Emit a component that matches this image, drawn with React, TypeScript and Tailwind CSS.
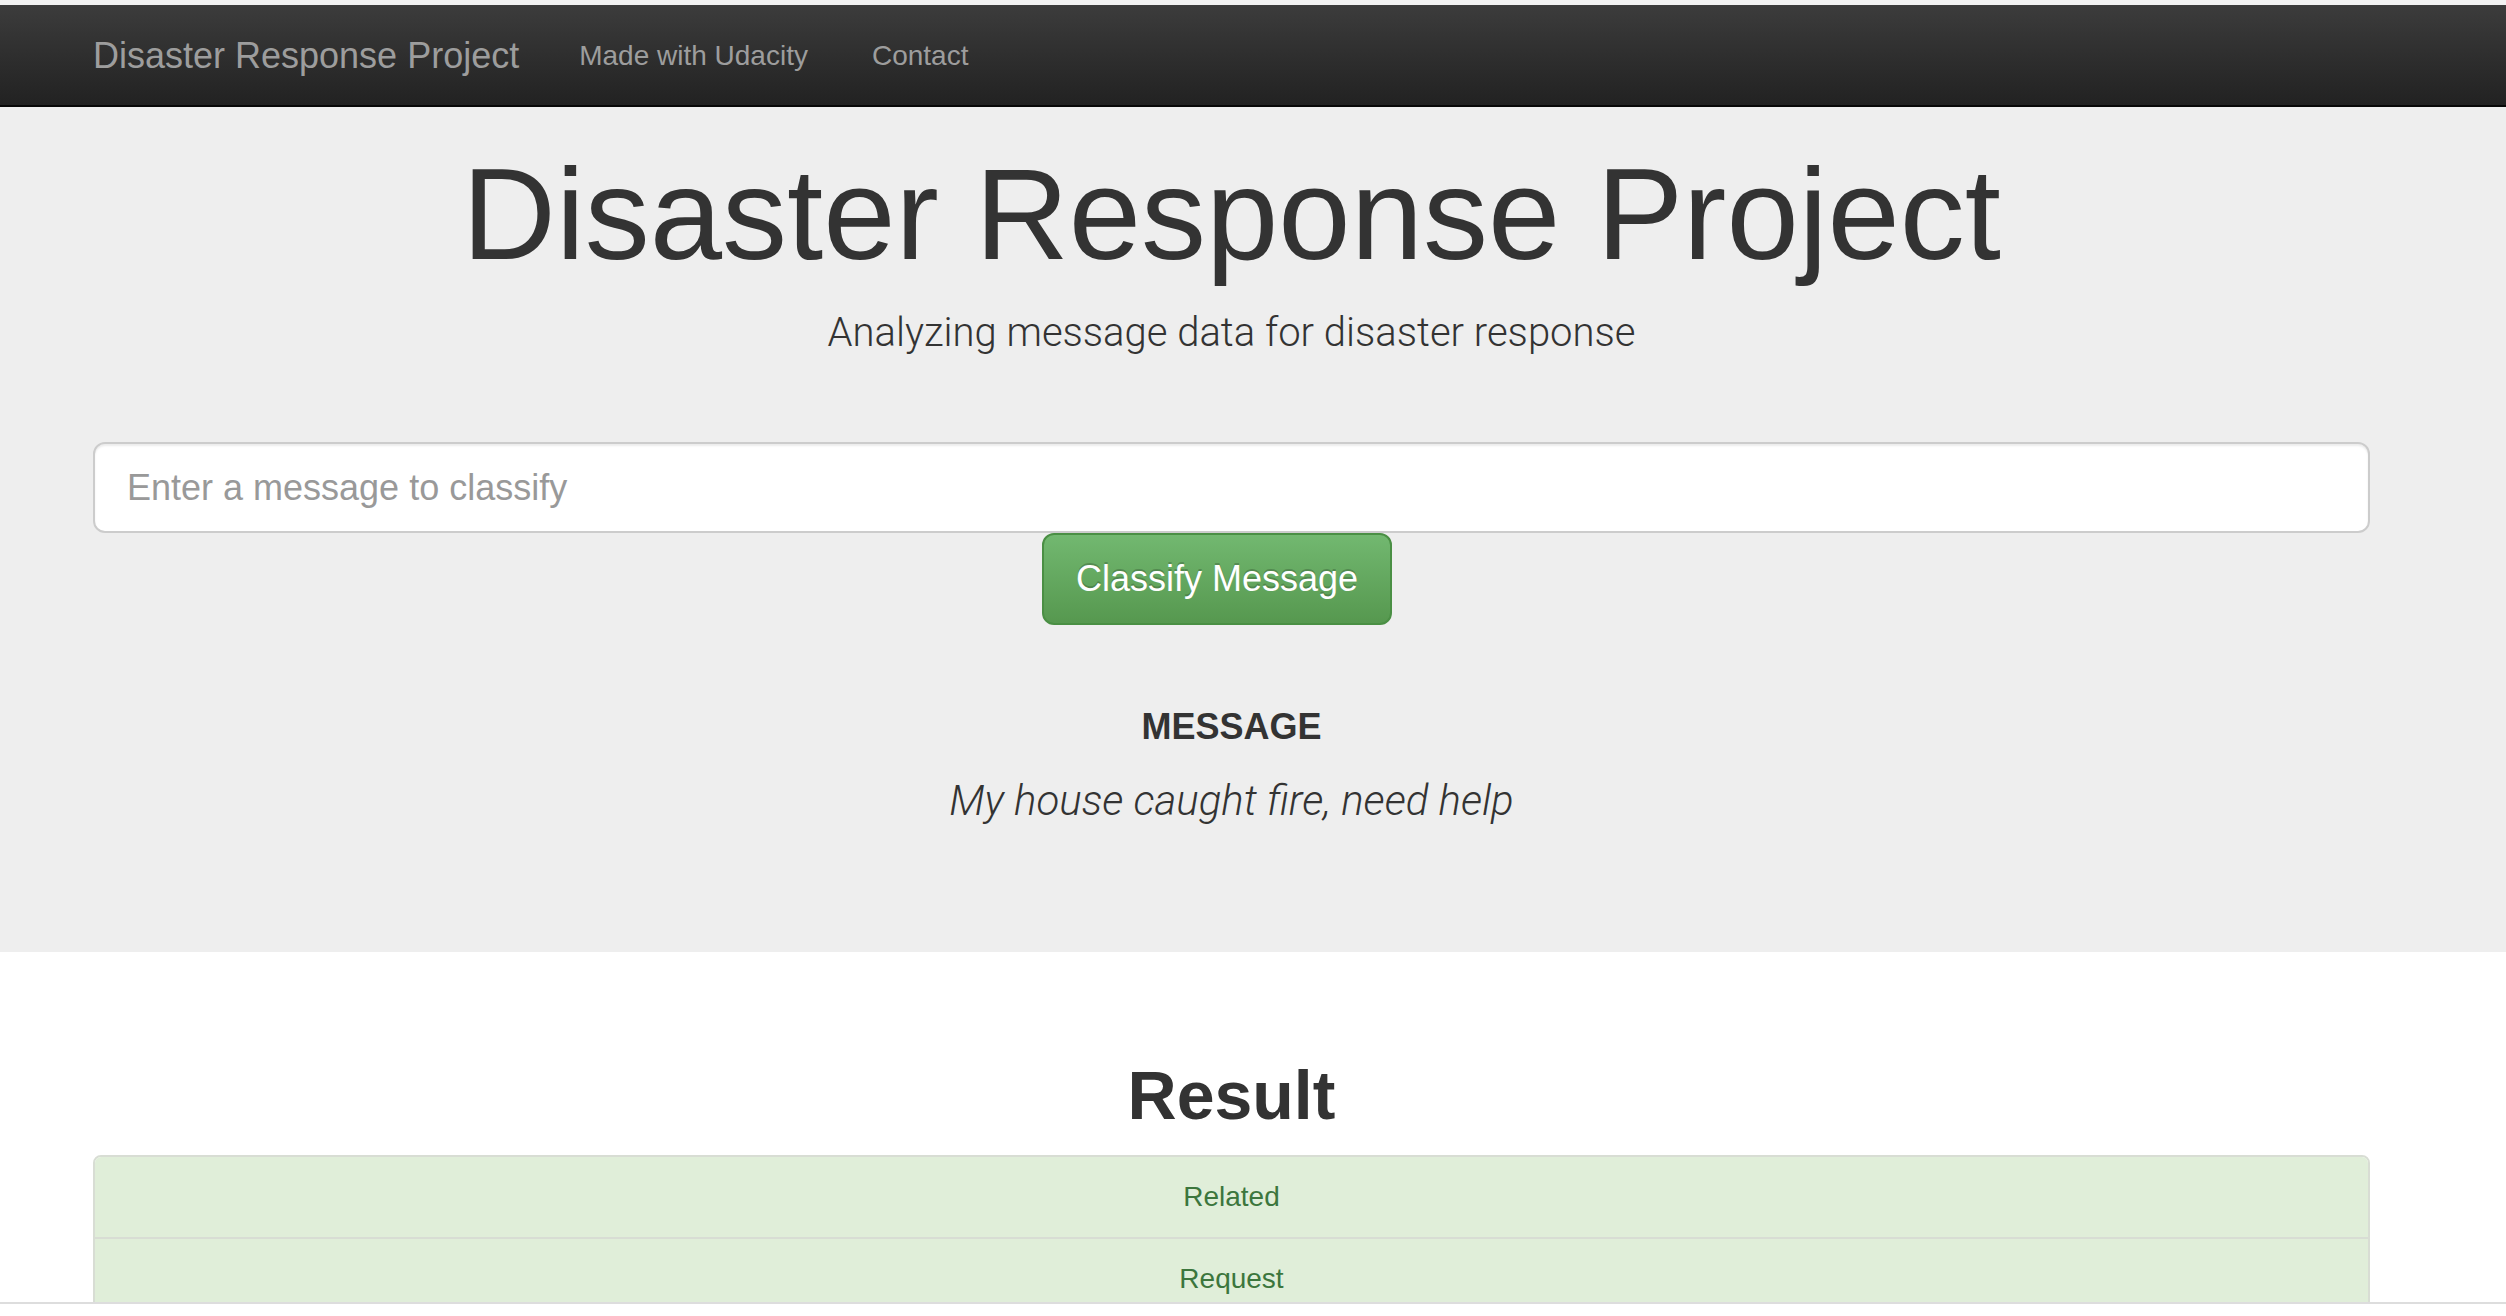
const RESULTS = ['Related', 'Request']

export default function App() {
  return (
    <div className="h-[1316px] overflow-hidden bg-white font-['Liberation_Sans',Arial,sans-serif] text-[#333333]">
      <div className="flex h-[1304px] flex-col overflow-hidden border-b-2 border-[#dddddd]">
        <div className="h-[5px] shrink-0 bg-[#f2f2f2]" />

        <nav className="h-[102px] shrink-0 border-b-2 border-[#080808] bg-gradient-to-b from-[#3c3c3c] to-[#222222]">
          <div className="ml-[93px] flex h-full items-center pt-[2px]">
            <a href="#" className="text-[36px] leading-none text-[#9d9d9d]">Disaster Response Project</a>
            <a href="#" className="ml-[60px] text-[28px] leading-none text-[#9d9d9d]">Made with Udacity</a>
            <a href="#" className="ml-[64px] text-[28px] leading-none text-[#9d9d9d]">Contact</a>
          </div>
        </nav>

        <section className="h-[845px] shrink-0 bg-[#eeeeee] pt-[42px]">
          <div className="ml-[93px] w-[2277px]">
            <h1 className="text-center text-[130px] leading-none">Disaster Response Project</h1>
            <p className="mt-[34px] text-center font-['Roboto',sans-serif] text-[40px] font-light leading-none">
              Analyzing message data for disaster response
            </p>

            <form className="mt-[89px]" onSubmit={(e) => e.preventDefault()}>
              <input
                type="text"
                placeholder="Enter a message to classify"
                className="block h-[91px] w-full rounded-[12px] border-2 border-[#cccccc] bg-white px-[32px] text-[36px] shadow-[inset_0_2px_2px_rgba(0,0,0,0.075)] outline-none placeholder:text-[#999999]"
              />
              <button
                type="submit"
                className="ml-[949px] block h-[92px] w-[350px] rounded-[12px] border-2 border-[#4a8f44] bg-gradient-to-b from-[#72b870] to-[#56984f] text-[36px] leading-none text-white [text-shadow:0_-2px_0_rgba(0,0,0,0.2)]"
              >
                Classify Message
              </button>
            </form>

            <h4 className="mt-[84px] text-center text-[36px] font-bold leading-none">MESSAGE</h4>
            <p className="mt-[35px] text-center font-['Roboto',sans-serif] text-[42px] font-light italic leading-none">
              My house caught fire, need help
            </p>
          </div>
        </section>

        <section className="flex-1 pt-[109px]">
          <div className="ml-[93px] w-[2277px]">
            <h1 className="text-center text-[68px] font-bold leading-none">Result</h1>
            <ul className="mt-[26px] overflow-hidden rounded-t-[8px] border-2 border-[#d8ddd4]">
              {RESULTS.map((r, i) => (
                <li
                  key={r}
                  className={`h-[80px] bg-[#e0eed9] text-center text-[28px] leading-[80px] text-[#3c763d] ${i > 0 ? 'border-t-2 border-[#d8ddd4]' : ''}`}
                >
                  {r}
                </li>
              ))}
            </ul>
          </div>
        </section>
      </div>
    </div>
  )
}
